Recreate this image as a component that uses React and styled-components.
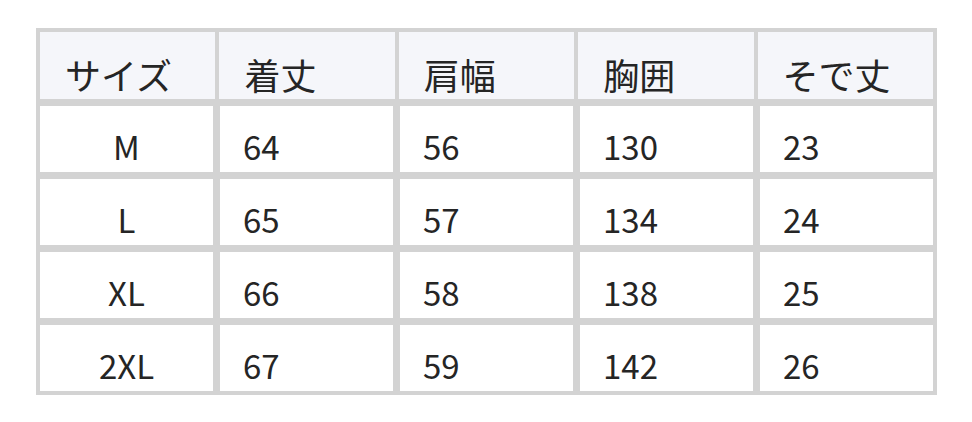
import React from 'react'
import styled, { createGlobalStyle } from 'styled-components'

const headers = ['サイズ', '着丈', '肩幅', '胸囲', 'そで丈']

const rows = [
  ['M', '64', '56', '130', '23'],
  ['L', '65', '57', '134', '24'],
  ['XL', '66', '58', '138', '25'],
  ['2XL', '67', '59', '142', '26'],
]

const App = () => {
  return (
    <>
      <GlobalStyle />
      <Page>
        <SizeTable>
          <HeaderRow>
            {headers.map((h) => (
              <HeadCell key={h}>{h}</HeadCell>
            ))}
          </HeaderRow>
          {rows.map((row) => (
            <BodyRow key={row[0]}>
              {row.map((value, i) => (
                <BodyCell key={i} $center={i === 0}>
                  {value}
                </BodyCell>
              ))}
            </BodyRow>
          ))}
        </SizeTable>
      </Page>
    </>
  )
}

const GlobalStyle = createGlobalStyle`
  body {
    margin: 0;
    background: #ffffff;
    font-family: 'Noto Sans CJK JP', 'Noto Sans', sans-serif;
    color: #252525;
  }
`

const Page = styled.div`
  padding: 28px 0 0 36px;
`

const SizeTable = styled.div`
  width: 901px;
  box-sizing: border-box;
  padding: 4px;
  background: #d3d3d3;
  display: grid;
  gap: 7px;
`

const HeaderRow = styled.div`
  display: grid;
  grid-template-columns: repeat(5, 1fr);
  gap: 4px;
  height: 67px;
`

const HeadCell = styled.div`
  background: #f5f6fa;
  display: flex;
  align-items: flex-end;
  padding: 0 0 3px 25px;
  font-size: 36px;
  line-height: 44px;
`

const BodyRow = styled.div`
  display: grid;
  grid-template-columns: repeat(5, 1fr);
  gap: 7px;
  height: 66px;
`

const BodyCell = styled.div`
  background: #ffffff;
  display: flex;
  align-items: flex-end;
  justify-content: ${(p) => (p.$center ? 'center' : 'flex-start')};
  padding: ${(p) => (p.$center ? '0 0 5px 0' : '0 0 5px 23px')};
  font-size: 33px;
  line-height: 41px;
`

export default App
